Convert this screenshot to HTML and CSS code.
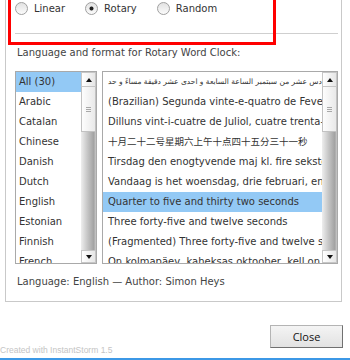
FILE: index.html
```html
<!DOCTYPE html>
<html lang="en">
<head>
  <meta charset="UTF-8">
  <meta name="viewport" content="width=device-width, initial-scale=1.0">
  <title>Word Clock Settings</title>
  <link rel="stylesheet" href="styles.css">
</head>
<body>
  <div class="screen">
    <div class="panel">
      <div class="modes">
        <label class="mode"><span class="radio"></span>Linear</label>
        <label class="mode"><span class="radio checked"></span>Rotary</label>
        <label class="mode"><span class="radio"></span>Random</label>
      </div>
      <div class="rule"></div>
      <p class="caption">Language and format for Rotary Word Clock:</p>

      <div class="lists">
        <div class="listbox languages">
          <ul class="items">
            <li class="item selected">All (30)</li>
            <li class="item">Arabic</li>
            <li class="item">Catalan</li>
            <li class="item">Chinese</li>
            <li class="item">Danish</li>
            <li class="item">Dutch</li>
            <li class="item">English</li>
            <li class="item">Estonian</li>
            <li class="item">Finnish</li>
            <li class="item">French</li>
          </ul>
          <div class="scrollbar">
            <div class="sb-button up"></div>
            <div class="sb-thumb"><span></span><span></span><span></span></div>
            <div class="sb-track"></div>
            <div class="sb-button down"></div>
          </div>
        </div>

        <div class="listbox formats">
          <ul class="items">
            <li class="item arabic">الخميس السادس عشر من سبتمبر الساعة السابعة و احدى عشر دقيقة مساءً و حد</li>
            <li class="item">(Brazilian) Segunda vinte-e-quatro de Fevereiro</li>
            <li class="item">Dilluns vint-i-cuatre de Juliol, cuatre trenta-cinc</li>
            <li class="item cjk">十月二十二号星期六上午十点四十五分三十一秒</li>
            <li class="item">Tirsdag den enogtyvende maj kl. fire seksten</li>
            <li class="item">Vandaag is het woensdag, drie februari, en het is</li>
            <li class="item selected">Quarter to five and thirty two seconds</li>
            <li class="item">Three forty-five and twelve seconds</li>
            <li class="item">(Fragmented) Three forty-five and twelve seconds</li>
            <li class="item">On kolmapäev, kaheksas oktoober, kell on viis</li>
          </ul>
          <div class="scrollbar">
            <div class="sb-button up"></div>
            <div class="sb-thumb"><span></span><span></span><span></span></div>
            <div class="sb-track"></div>
            <div class="sb-button down"></div>
          </div>
        </div>
      </div>

      <p class="about">Language: English — Author: Simon Heys</p>
    </div>

    <div class="actions">
      <button class="close-button">Close</button>
    </div>

    <div class="made-with">Created with InstantStorm 1.5</div>
    <div class="highlight"></div>
  </div>
</body>
</html>
```

FILE: styles.css
```css
body {
  margin: 0;
  background-color: white;
  font-family: "DejaVu Sans", Verdana, sans-serif;
  font-size: 10px;
  color: #444;
}
.screen {
  position: relative;
  width: 350px;
  height: 358px;
  border-bottom: 2px solid #3c98e6;
  overflow: hidden;
}
.panel {
  margin-left: 5px;
  width: 323px;
  padding: 2px 3px 13px 9px;
  border: 1px solid #c9c9c9;
  border-top: none;
}
.modes {
  display: flex;
  align-items: center;
  height: 13px;
}
.mode {
  display: flex;
  align-items: center;
  margin-right: 20px;
  color: #333;
}
.radio {
  width: 11px;
  height: 11px;
  margin-right: 6px;
  border: 1px solid #a0a0a0;
  border-radius: 50%;
  background: linear-gradient(#e2e2e2, #fbfbfb);
}
.radio.checked {
  background: radial-gradient(circle, #222 0 1.6px, transparent 2.4px), linear-gradient(#e2e2e2, #fbfbfb);
}
.rule {
  margin-top: 18px;
  border-top: 1px solid #cfcfcf;
}
.caption {
  margin: 12px 0 0 2px;
  line-height: 13px;
}
.lists {
  display: flex;
  gap: 5px;
  margin-top: 12px;
  height: 193px;
}
.listbox {
  display: flex;
  border: 1px solid #a9a9a9;
  background-color: white;
  overflow: hidden;
}
.languages {
  width: 80px;
}
.formats {
  width: 234px;
}
.items {
  flex: 1;
  min-width: 0;
  margin: 0;
  padding: 0;
  list-style-type: none;
}
.item {
  height: 20px;
  line-height: 20px;
  padding-left: 3px;
  white-space: nowrap;
  overflow: hidden;
  color: #333;
}
.formats .item {
  padding-left: 5px;
}
.item.selected {
  background-color: #93c9f5;
}
.item.arabic {
  font-size: 7.5px;
}
.item.cjk {
  font-family: "DejaVu Sans", "Noto Sans CJK SC", sans-serif;
  font-size: 9.5px;
}
.scrollbar {
  display: flex;
  flex-direction: column;
  width: 15px;
  flex-shrink: 0;
}
.sb-button {
  display: flex;
  align-items: center;
  justify-content: center;
  height: 13px;
  border: 1px solid #c6c6c6;
  background: linear-gradient(to right, #ffffff, #e6e6e6);
}
.sb-button::before {
  content: "";
  border-left: 3px solid transparent;
  border-right: 3px solid transparent;
}
.sb-button.up::before {
  border-bottom: 4px solid #111;
}
.sb-button.down {
  height: 11px;
}
.sb-button.down::before {
  border-top: 4px solid #111;
}
.sb-thumb {
  display: flex;
  flex-direction: column;
  align-items: center;
  justify-content: center;
  gap: 1px;
  height: 44px;
  border: 1px solid #c2c2c2;
  border-top: none;
  background: linear-gradient(to right, #fdfdfd, #e9e9e9);
}
.sb-thumb span {
  width: 5px;
  height: 1px;
  background-color: #a8a8a8;
}
.sb-track {
  flex: 1;
  background: linear-gradient(to right, #eeeeee, #c4c4c4 45%, #a2a2a2 85%, #c9c9c9);
}
.about {
  margin: 11px 0 0 2px;
  line-height: 13px;
}
.actions {
  display: flex;
  justify-content: flex-end;
  padding: 23px 7px 0 0;
}
.close-button {
  width: 73px;
  height: 23px;
  padding: 0;
  font-family: "Open Sans", "Liberation Sans", sans-serif;
  font-size: 11px;
  color: #111;
  border: 1px solid #b4b4b4;
  border-right-color: #707070;
  border-bottom-color: #707070;
  background: linear-gradient(#f4f4f4, #e2e2e2);
}
.made-with {
  position: absolute;
  left: 0;
  bottom: 2px;
  font-family: "Liberation Sans", Arial, sans-serif;
  font-size: 8.5px;
  line-height: 11px;
  color: #c4c4c4;
}
.highlight {
  position: absolute;
  left: 8px;
  top: -20px;
  width: 262px;
  height: 59px;
  border: 3px solid #f00;
}
```
